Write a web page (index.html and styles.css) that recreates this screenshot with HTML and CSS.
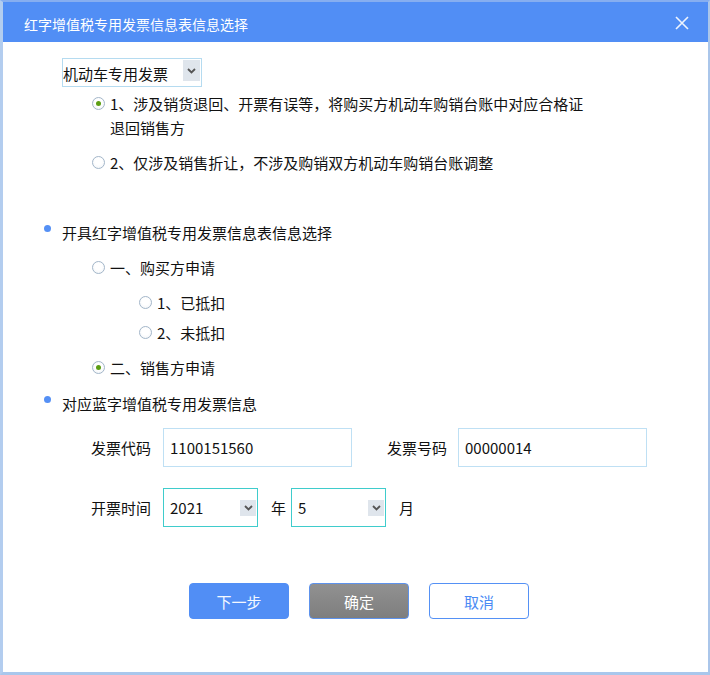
FILE: index.html
```html
<!DOCTYPE html>
<html lang="zh-CN">
<head>
<meta charset="utf-8">
<title>红字增值税专用发票信息表信息选择</title>
<link rel="stylesheet" href="styles.css">
</head>
<body>
<div class="dialog">
  <div class="header">
    <span class="title">红字增值税专用发票信息表信息选择</span>
    <svg class="close" width="14" height="14" viewBox="0 0 14 14"><path d="M1 1 L13 13 M13 1 L1 13" stroke="#eef4fe" stroke-width="1.6" fill="none"/></svg>
  </div>
  <div class="body">
    <div class="select type-select">
      <span class="sel-text">机动车专用发票</span>
      <span class="arrow"><svg width="9" height="6" viewBox="0 0 9 6"><path d="M1 1 L4.5 4.5 L8 1" stroke="#555" stroke-width="1.8" fill="none"/></svg></span>
    </div>
    <div class="opt lvl1 gap5"><span class="radio checked"></span><span class="label">1、涉及销货退回、开票有误等，将购买方机动车购销台账中对应合格证<br>退回销售方</span></div>
    <div class="opt lvl1 gap11"><span class="radio"></span><span class="label">2、仅涉及销售折让，不涉及购销双方机动车购销台账调整</span></div>

    <div class="bullet-item gap46"><span class="dot"></span><span class="label">开具红字增值税专用发票信息表信息选择</span></div>
    <div class="opt lvl1 gap11"><span class="radio"></span><span class="label">一、购买方申请</span></div>
    <div class="opt lvl2 gap11"><span class="radio"></span><span class="label">1、已抵扣</span></div>
    <div class="opt lvl2 gap6"><span class="radio"></span><span class="label">2、未抵扣</span></div>
    <div class="opt lvl1 gap11"><span class="radio checked"></span><span class="label">二、销售方申请</span></div>

    <div class="bullet-item gap12"><span class="dot"></span><span class="label">对应蓝字增值税专用发票信息</span></div>

    <div class="field-row gap12">
      <span class="field-label">发票代码</span>
      <div class="input">1100151560</div>
      <span class="field-label second">发票号码</span>
      <div class="input">00000014</div>
    </div>
    <div class="field-row gap21">
      <span class="field-label">开票时间</span>
      <div class="select date-select">
        <span class="sel-text">2021</span>
        <span class="arrow small"><svg width="9" height="6" viewBox="0 0 9 6"><path d="M1 1 L4.5 4.5 L8 1" stroke="#555" stroke-width="1.8" fill="none"/></svg></span>
      </div>
      <span class="unit">年</span>
      <div class="select date-select tight">
        <span class="sel-text">5</span>
        <span class="arrow small"><svg width="9" height="6" viewBox="0 0 9 6"><path d="M1 1 L4.5 4.5 L8 1" stroke="#555" stroke-width="1.8" fill="none"/></svg></span>
      </div>
      <span class="unit">月</span>
    </div>

    <div class="buttons">
      <button class="btn primary">下一步</button>
      <button class="btn gray">确定</button>
      <button class="btn outline">取消</button>
    </div>
  </div>
</div>
</body>
</html>
```
FILE: styles.css
```css
html, body {
  margin: 0;
  padding: 0;
  background: #ffffff;
}
body {
  font-family: "Noto Sans CJK SC", "Noto Sans", sans-serif;
  color: #111111;
}
.dialog {
  width: 710px;
  height: 675px;
  box-sizing: border-box;
  border-top: 2px solid #86aef0;
  border-left: 3px solid #b3cdef;
  border-right: 2px solid #aac6ea;
  border-bottom: 3px solid #a9c7ec;
  background: #ffffff;
  display: flex;
  flex-direction: column;
}
.header {
  height: 40px;
  flex: none;
  background: #518ef5;
  display: flex;
  align-items: center;
  justify-content: space-between;
  padding: 0 19px 0 21px;
}
.title {
  color: #ffffff;
  font-size: 14px;
  line-height: 20px;
  padding-top: 3px;
}
.close {
  display: block;
  margin-top: 1px;
}
.body {
  padding-left: 41px;
  font-size: 15px;
}
.gap5 { margin-top: 5px; }
.gap6 { margin-top: 6px; }
.gap11 { margin-top: 11px; }
.gap12 { margin-top: 12px; }
.gap21 { margin-top: 21px; }
.gap46 { margin-top: 46px; }

.select {
  box-sizing: border-box;
  display: flex;
  align-items: center;
  justify-content: space-between;
  background: #ffffff;
}
.type-select {
  margin-top: 16px;
  margin-left: 18px;
  width: 140px;
  height: 29px;
  border: 1px solid #b5dbf0;
  padding: 1px 1px 1px 0;
  align-items: stretch;
}
.type-select .sel-text {
  line-height: 27px;
}
.arrow {
  width: 17px;
  background: #dfe5ec;
  display: flex;
  align-items: center;
  justify-content: center;
}
.type-select .arrow {
  height: 21px;
  align-self: flex-start;
}
.arrow svg { display: block; }

.opt {
  display: flex;
  align-items: flex-start;
  line-height: 24px;
}
.lvl1 { margin-left: 48px; }
.lvl2 { margin-left: 95px; }
.radio {
  flex: none;
  box-sizing: border-box;
  width: 13px;
  height: 13px;
  border-radius: 50%;
  border: 1px solid #a3b6c9;
  background: radial-gradient(circle at 50% 40%, #ffffff 40%, #eef2f6 100%);
  margin-top: 5px;
  margin-right: 5px;
  display: flex;
  align-items: center;
  justify-content: center;
}
.radio.checked::after {
  content: "";
  width: 5px;
  height: 5px;
  border-radius: 50%;
  background: #5c9e14;
}
.bullet-item {
  display: flex;
  align-items: flex-start;
  line-height: 24px;
}
.dot {
  flex: none;
  width: 7px;
  height: 7px;
  border-radius: 50%;
  background: #5590f5;
  margin-top: 4px;
  margin-right: 11px;
}

.field-row {
  display: flex;
  align-items: center;
  margin-left: 47px;
  height: 39px;
}
.field-label {
  width: 60px;
  margin-right: 12px;
}
.field-label.second {
  margin-left: 35px;
  margin-right: 11px;
}
.input {
  box-sizing: border-box;
  width: 189px;
  height: 39px;
  border: 1px solid #bfe0f4;
  padding-left: 6px;
  line-height: 37px;
}
.date-select {
  width: 95px;
  height: 39px;
  border: 1px solid #3fcccc;
  padding: 0 1px 0 6px;
}
.date-select .arrow {
  width: 16px;
  height: 16px;
}
.unit {
  margin: 0 5px 0 13px;
}
.buttons {
  display: flex;
  gap: 20px;
  margin-top: 56px;
  margin-left: 145px;
}
.btn {
  box-sizing: border-box;
  width: 100px;
  height: 36px;
  border-radius: 4px;
  font-family: inherit;
  font-size: 15px;
  padding: 0;
  cursor: pointer;
}
.primary {
  background: #518ef5;
  border: 1px solid #518ef5;
  color: #f4f8ff;
}
.gray {
  background: linear-gradient(#919191, #7e7e7e);
  border: 1px solid #5d92ec;
  color: #ffffff;
}
.outline {
  background: #ffffff;
  border: 1px solid #5591f5;
  color: #4a8af4;
}
```
